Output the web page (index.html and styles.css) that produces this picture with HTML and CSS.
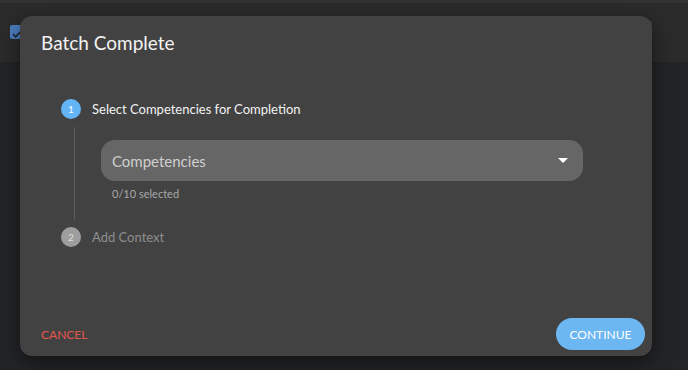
FILE: index.html
```html
<!DOCTYPE html>
<html lang="en">
<head>
  <meta charset="UTF-8" />
  <title>Batch Complete</title>
  <link rel="stylesheet" href="styles.css">
</head>
<body>
  <div class="topbar"></div>
  <div class="header">
    <span class="checkbox">
      <svg width="14" height="14" viewBox="0 0 14 14"><path d="M3 7.2l2.6 2.6L11 4.4" fill="none" stroke="#1f2a3a" stroke-width="1.8"/></svg>
    </span>
    <span class="header-text">Unmarked Control Matrix &nbsp; &nbsp; &nbsp; Assessed Score</span>
  </div>

  <div class="dialog">
    <h1>Batch Complete</h1>

    <div class="stepper">
      <div class="step active">
        <span class="step-num">1</span>
        <span class="step-label">Select Competencies for Completion</span>
      </div>
      <div class="step-content">
        <div class="select">
          <span>Competencies</span>
          <svg width="10" height="5" viewBox="0 0 10 5"><path d="M0 0h10L5 5z" fill="#fff"/></svg>
        </div>
        <div class="helper">0/10 selected</div>
      </div>
      <div class="step">
        <span class="step-num">2</span>
        <span class="step-label">Add Context</span>
      </div>
    </div>

    <div class="actions">
      <button class="btn-cancel">CANCEL</button>
      <button class="btn-continue">CONTINUE</button>
    </div>
  </div>
</body>
</html>
```

FILE: styles.css
```css
body {
  margin: 0;
  background: #232427;
  font-family: 'Lato', 'Noto Sans', sans-serif;
  height: 370px;
  overflow: hidden;
  position: relative;
}
.topbar {
  height: 3px;
  background: #333;
}
.header {
  height: 59px;
  background: #2b2b2b;
  display: flex;
  align-items: center;
  justify-content: space-between;
  padding: 0 36px 0 10px;
}
.checkbox {
  width: 14px;
  height: 14px;
  background: #4b7ec0;
  border-radius: 2px;
  margin-top: -2px;
}
.header-text {
  color: #666;
  font-size: 11px;
  margin-top: -20px;
}
.dialog {
  position: absolute;
  left: 20px;
  top: 16px;
  width: 632px;
  height: 340px;
  box-sizing: border-box;
  background: #424242;
  border-radius: 12px;
  box-shadow: 0 6px 20px rgba(0,0,0,0.5);
  padding: 15px 7px 6px 21px;
  display: flex;
  flex-direction: column;
}
h1 {
  margin: 0;
  font-size: 19px;
  font-weight: 400;
  line-height: 24px;
  color: #f2f2f2;
}
.stepper {
  margin-top: 44px;
  padding-left: 20px;
}
.step {
  display: flex;
  align-items: center;
  gap: 11px;
  height: 20px;
}
.step-num {
  width: 20px;
  height: 20px;
  border-radius: 50%;
  background: #9e9e9e;
  color: #e0e0e0;
  font-size: 10px;
  display: flex;
  align-items: center;
  justify-content: center;
}
.step-label {
  font-size: 13px;
  color: #8e8e8e;
}
.step.active .step-num {
  background: #64b5f6;
  color: #fff;
}
.step.active .step-label {
  color: #f2f2f2;
}
.step-content {
  margin: 8px 0 7px 13px;
  border-left: 1px solid #5e5e5e;
  padding: 13px 62px 19px 26px;
}
.select {
  height: 41px;
  background: #666;
  border-radius: 14px;
  display: flex;
  align-items: center;
  justify-content: space-between;
  padding: 0 15px 0 11px;
  font-size: 15px;
  color: #cfcfcf;
}
.helper {
  margin-top: 6px;
  padding-left: 11px;
  font-size: 11px;
  line-height: 14px;
  color: #a8a8a8;
}
.actions {
  margin-top: auto;
  display: flex;
  justify-content: space-between;
  align-items: center;
}
button {
  font-family: inherit;
  font-size: 12px;
  border: none;
  cursor: pointer;
}
.btn-cancel {
  background: none;
  color: #e5574c;
  padding: 0;
}
.btn-continue {
  background: #6cb6f2;
  color: #fff;
  height: 32px;
  width: 89px;
  border-radius: 16px;
}
```
